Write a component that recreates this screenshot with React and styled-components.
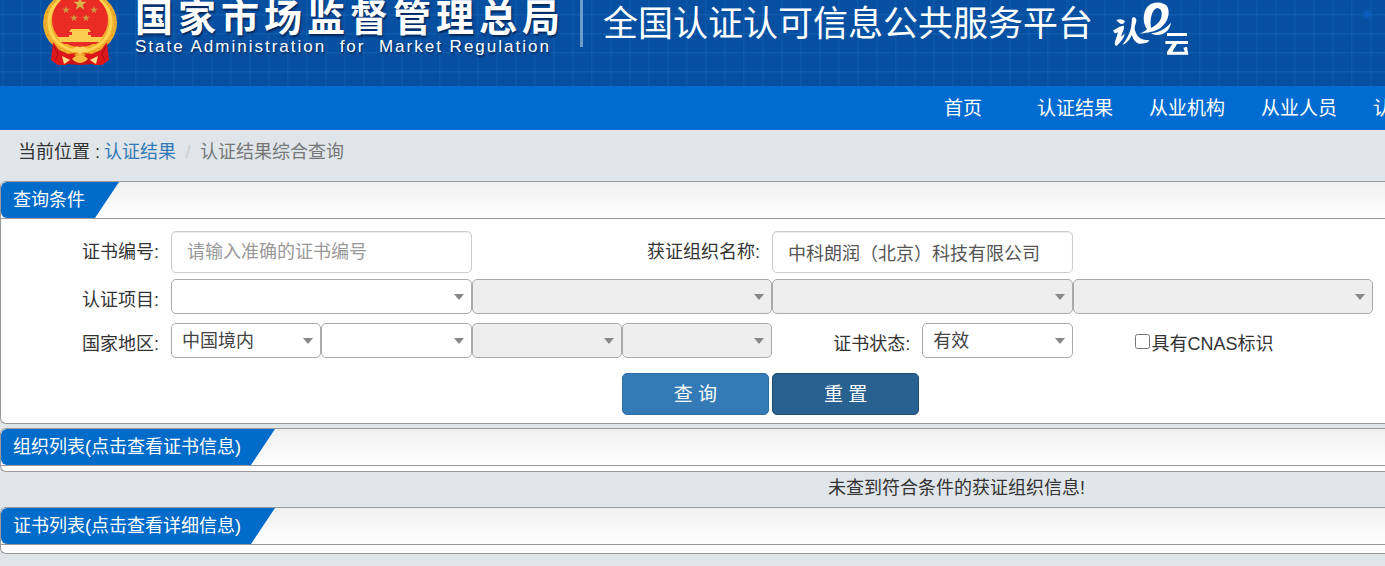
import React from "react";
import styled, { createGlobalStyle } from "styled-components";

const GlobalStyle = createGlobalStyle`
  *, *::before, *::after {
    box-sizing: border-box;
  }
  body {
    margin: 0;
    background: #e0e5e9;
    color: #333;
    font: 18px/26px "Liberation Sans", "Noto Sans CJK SC", sans-serif;
    overflow: hidden;
  }
  button, input, select {
    font-family: inherit;
    font-size: inherit;
  }
`;

const Header = styled.header`
  display: flex;
  align-items: flex-start;
  height: 86px;
  padding-left: 42px;
  color: #fff;
  overflow: hidden;
  background:
    radial-gradient(circle at calc(100% - 18px) 14px, rgba(10, 100, 205, 0.8), transparent 6px),
    linear-gradient(90deg, rgba(60, 140, 220, 0.14) 1px, transparent 2px) 2px 0 / 19px 19px,
    linear-gradient(rgba(60, 140, 220, 0.18) 1px, transparent 2px) 0 14px / 19px 19px,
    #064fa1;
`;

const Brand = styled.div`
  margin-left: 17px;
  text-shadow: 1px 2px 2px rgba(0, 20, 60, 0.7);
  white-space: nowrap;
`;

const BrandName = styled.div`
  font-size: 38px;
  font-weight: 700;
  line-height: 36px;
  letter-spacing: 5px;
`;

const BrandSub = styled.div`
  font-size: 17px;
  line-height: 22px;
  letter-spacing: 2px;
  white-space: pre;
`;

const Divider = styled.div`
  width: 3px;
  height: 47px;
  margin: 0 20px 0 15px;
  background: #6c9bce;
`;

const Title = styled.h1`
  margin: 0 20px 0 0;
  font-size: 35px;
  font-weight: 400;
  line-height: 48px;
  white-space: nowrap;
`;

const Nav = styled.nav`
  display: flex;
  height: 44px;
  padding-left: 907px;
  background: #006bd0;
  overflow: hidden;
`;

const NavLink = styled.a`
  flex: 0 0 112px;
  color: #fff;
  font-size: 19px;
  line-height: 46px;
  text-align: center;
  text-decoration: none;
`;

const Breadcrumb = styled.div`
  display: flex;
  height: 51px;
  padding: 9px 18px;
  color: #777;
`;

const CrumbLabel = styled.span`
  margin-right: 4px;
  color: #333;
`;

const CrumbLink = styled.a`
  color: #337ab7;
  text-decoration: none;
`;

const Slash = styled.span`
  width: 24px;
  color: #ccc;
  text-align: center;
`;

const Panel = styled.section`
  border: 1px solid #999;
  border-right: 0;
  border-radius: 6px 0 0 6px;
  background: #fff;
  overflow: hidden;
`;

const PanelHead = styled.div`
  border-bottom: 1px solid #999;
  background: linear-gradient(#f0f0f0, #fff);
`;

const PanelTitle = styled.h2`
  width: fit-content;
  margin: 0;
  padding: 0 34px 0 12px;
  border-radius: 6px 0 0 6px;
  background: #006bc9;
  clip-path: polygon(0 0, 100% 0, calc(100% - 24px) 100%, 0 100%);
  color: #fff;
  font-size: 18px;
  font-weight: 400;
  line-height: 36px;
`;

const PanelFoot = styled.div`
  height: ${({ $size }) => $size}px;
`;

const SearchForm = styled.form`
  display: flex;
  flex-direction: column;
  padding: 12px 12px 8px 0;
`;

const Row = styled.div`
  display: grid;
  grid-template-columns: 170px repeat(8, 1fr);
  align-items: start;
  margin-top: ${({ $gap = 0 }) => $gap}px;
`;

const Label = styled.label`
  grid-column: span ${({ $span = 1 }) => $span};
  padding: 8px 12px 0 0;
  text-align: right;
  white-space: nowrap;
`;

const TextInput = styled.input`
  grid-column: span 2;
  width: 100%;
  min-width: 0;
  height: 42px;
  padding: 0 15px;
  border: 1px solid #ccc;
  border-radius: 5px;
  background: #fff;
  box-shadow: inset 0 1px 1px rgba(0, 0, 0, 0.08);
  color: #555;

  &::placeholder {
    color: #999;
  }
`;

const SelectBox = styled.div`
  display: grid;
  grid-column: span ${({ $span = 1 }) => $span};
  align-items: center;

  &::after {
    content: "";
    grid-area: 1 / 1;
    justify-self: end;
    margin-right: 8px;
    border: 5px solid transparent;
    border-top: 6px solid #888;
    border-bottom: 0;
    pointer-events: none;
  }
`;

const Select = styled.select`
  grid-area: 1 / 1;
  width: 100%;
  height: 35px;
  padding: 0 24px 0 10px;
  appearance: none;
  border: 1px solid #aaa;
  border-radius: 5px;
  background: #fff;
  color: #444;
  opacity: 1;

  &:disabled {
    background: #eee;
  }
`;

const CheckLabel = styled.label`
  display: flex;
  grid-column: span 2;
  align-items: center;
  gap: 2px;
  padding: 8px 0 0 62px;
  white-space: nowrap;
`;

const Checkbox = styled.input`
  width: 15px;
  height: 15px;
  margin: 0 0 5px;
`;

const Button = styled.button`
  grid-column: ${({ $start }) => $start};
  height: 42px;
  margin-right: 3px;
  padding: 0 0 4px;
  border: 1px solid ${({ $dark }) => ($dark ? "#204d74" : "#2e6da4")};
  border-radius: 5px;
  background: ${({ $dark }) => ($dark ? "#286090" : "#337ab7")};
  color: #fff;
  font-size: 19px;
`;

const Message = styled.p`
  margin: 0;
  padding: 3px 300px 6px 0;
  text-align: right;
`;

const Gap = styled.div`
  height: 4px;
`;

const star = (cx, cy, r) =>
  Array.from({ length: 10 }, (_, i) => {
    const a = (Math.PI / 5) * i - Math.PI / 2;
    const d = i % 2 ? r * 0.4 : r;
    return `${(cx + d * Math.cos(a)).toFixed(2)},${(cy + d * Math.sin(a)).toFixed(2)}`;
  }).join(" ");

const Emblem = () => (
  <svg width="76" height="67" viewBox="0 0 76 67" aria-hidden="true">
    <path d="M24 52 H52 V64 L38 65 L24 64 Z" fill="#c81218" />
    <ellipse cx="38" cy="23" rx="37" ry="33" fill="#f0b02c" />
    <ellipse cx="38" cy="22" rx="31" ry="29" fill="none" stroke="#ffd352" strokeWidth="3" />
    <ellipse cx="38" cy="23" rx="35" ry="31" fill="none" stroke="#d98f1d" strokeWidth="1" strokeDasharray="2 4" />
    <ellipse cx="38" cy="20" rx="28" ry="27" fill="#e92a25" />
    <polygon points={star(38, 4, 7)} fill="#d9b24a" />
    <polygon points={star(24, 10, 4)} fill="#d29a3a" />
    <polygon points={star(52, 10, 4)} fill="#d29a3a" />
    <polygon points={star(32, 18, 4)} fill="#d29a3a" />
    <polygon points={star(44, 18, 4)} fill="#d29a3a" />
    <path d="M29 29 H47 L49 32 H46 V35 H49 V37 H61 L58 42 H18 L15 37 H27 V35 H30 V32 H27 Z" fill="#f9cd50" />
    <path d="M19 42 H57 L54 44 H22 Z" fill="#e92a25" />
    <path d="M11 42 L17 50 L26 54 L34 53 L30 59 L24 65 L16 65 L9 60 Z" fill="#de171b" />
    <path d="M65 42 L59 50 L50 54 L42 53 L46 59 L52 65 L60 65 L67 60 Z" fill="#de171b" />
    <path d="M12 46 L16 54 L13 61 M64 46 L60 54 L63 61" fill="none" stroke="#a90d14" />
    <path d="M29 52 Q33 45 38 47 Q43 45 47 52 L42 51 L38 54 L34 51 Z" fill="#ffd35c" />
    <path d="M30 59 Q38 51 46 59 Q42 63 38 63 Q34 63 30 59 Z" fill="#f7b93c" />
    <path d="M20 56 L28 60 L22 64 Z M56 56 L48 60 L54 64 Z" fill="#ffe08a" />
  </svg>
);

const CloudLogo = () => (
  <svg width="78" height="58" viewBox="24 0 234 174" fill="#fff" aria-hidden="true">
    <path d="M34 61 C42 55 54 58 60 64 C58 71 50 75 44 70 Z" />
    <path d="M25 90 C34 88 42 78 56 77 C60 84 52 96 48 110 L59 101 C57 115 46 127 34 138 C26 134 30 125 33 116 L39 97 C34 99 27 104 25 90 Z" />
    <path d="M81 54 C88 48 96 55 94 64 C92 74 88 80 89 87 C92 102 101 117 118 119 L133 121 C128 132 112 131 101 131 C90 127 84 117 80 105 C74 120 65 130 52 135 C62 122 72 106 77 88 C80 76 80 66 81 54 Z" />
    <path
      fillRule="evenodd"
      d="M126 88 C112 70 114 38 126 22 C138 4 172 2 186 18 C198 38 188 68 166 84 C150 95 130 98 105 101 C112 98 120 94 126 88 Z M139 84 C133 64 140 26 158 24 C175 27 173 54 161 67 C154 75 147 80 139 84 Z"
    />
    <path d="M138 100 C162 97 180 88 198 68 C195 86 183 101 164 104 C154 106 145 104 138 100 Z" />
    <path d="M186 99 H246 V108 H186 Z M181 123 H249 V132 H216 L202 155 H239 L235 143 L246 140 L250 164 H186 V156 L202 132 H181 Z" />
  </svg>
);

const navItems = ["首页", "认证结果", "从业机构", "从业人员", "认证活动"];

const SelectField = ({ span, label, value = "", disabled }) => (
  <SelectBox $span={span}>
    <Select aria-label={label} disabled={disabled} defaultValue={value}>
      <option>{value}</option>
    </Select>
  </SelectBox>
);

const App = () => {
  return (
    <>
      <GlobalStyle />
      <Header>
        <Emblem />
        <Brand>
          <BrandName>国家市场监督管理总局</BrandName>
          <BrandSub>State Administration  for  Market Regulation</BrandSub>
        </Brand>
        <Divider />
        <Title>全国认证认可信息公共服务平台</Title>
        <CloudLogo />
      </Header>
      <Nav>
        {navItems.map((item) => (
          <NavLink href="#" key={item}>
            {item}
          </NavLink>
        ))}
      </Nav>
      <Breadcrumb>
        <CrumbLabel>当前位置 :</CrumbLabel>
        <CrumbLink href="#">认证结果</CrumbLink>
        <Slash>/</Slash>
        <span>认证结果综合查询</span>
      </Breadcrumb>

      <Panel>
        <PanelHead>
          <PanelTitle>查询条件</PanelTitle>
        </PanelHead>
        <SearchForm onSubmit={(e) => e.preventDefault()}>
          <Row>
            <Label htmlFor="certNo">证书编号:</Label>
            <TextInput id="certNo" placeholder="请输入准确的证书编号" />
            <Label htmlFor="orgName" $span={2}>
              获证组织名称:
            </Label>
            <TextInput id="orgName" defaultValue="中科朗润（北京）科技有限公司" />
          </Row>
          <Row $gap={6}>
            <Label as="span">认证项目:</Label>
            <SelectField span={2} label="认证项目" />
            <SelectField span={2} label="认证项目" disabled />
            <SelectField span={2} label="认证项目" disabled />
            <SelectField span={2} label="认证项目" disabled />
          </Row>
          <Row $gap={9}>
            <Label as="span">国家地区:</Label>
            <SelectField label="国家地区" value="中国境内" />
            <SelectField label="国家地区" />
            <SelectField label="国家地区" disabled />
            <SelectField label="国家地区" disabled />
            <Label as="span">证书状态:</Label>
            <SelectField label="证书状态" value="有效" />
            <CheckLabel>
              <Checkbox type="checkbox" />
              具有CNAS标识
            </CheckLabel>
          </Row>
          <Row $gap={15}>
            <Button type="submit" $start={5}>
              查 询
            </Button>
            <Button type="reset" $start={6} $dark>
              重 置
            </Button>
          </Row>
        </SearchForm>
      </Panel>
      <Gap />
      <Panel>
        <PanelHead>
          <PanelTitle>组织列表(点击查看证书信息)</PanelTitle>
        </PanelHead>
        <PanelFoot $size={5} />
      </Panel>
      <Message>未查到符合条件的获证组织信息!</Message>
      <Panel>
        <PanelHead>
          <PanelTitle>证书列表(点击查看详细信息)</PanelTitle>
        </PanelHead>
        <PanelFoot $size={8} />
      </Panel>
    </>
  );
};

export default App;
